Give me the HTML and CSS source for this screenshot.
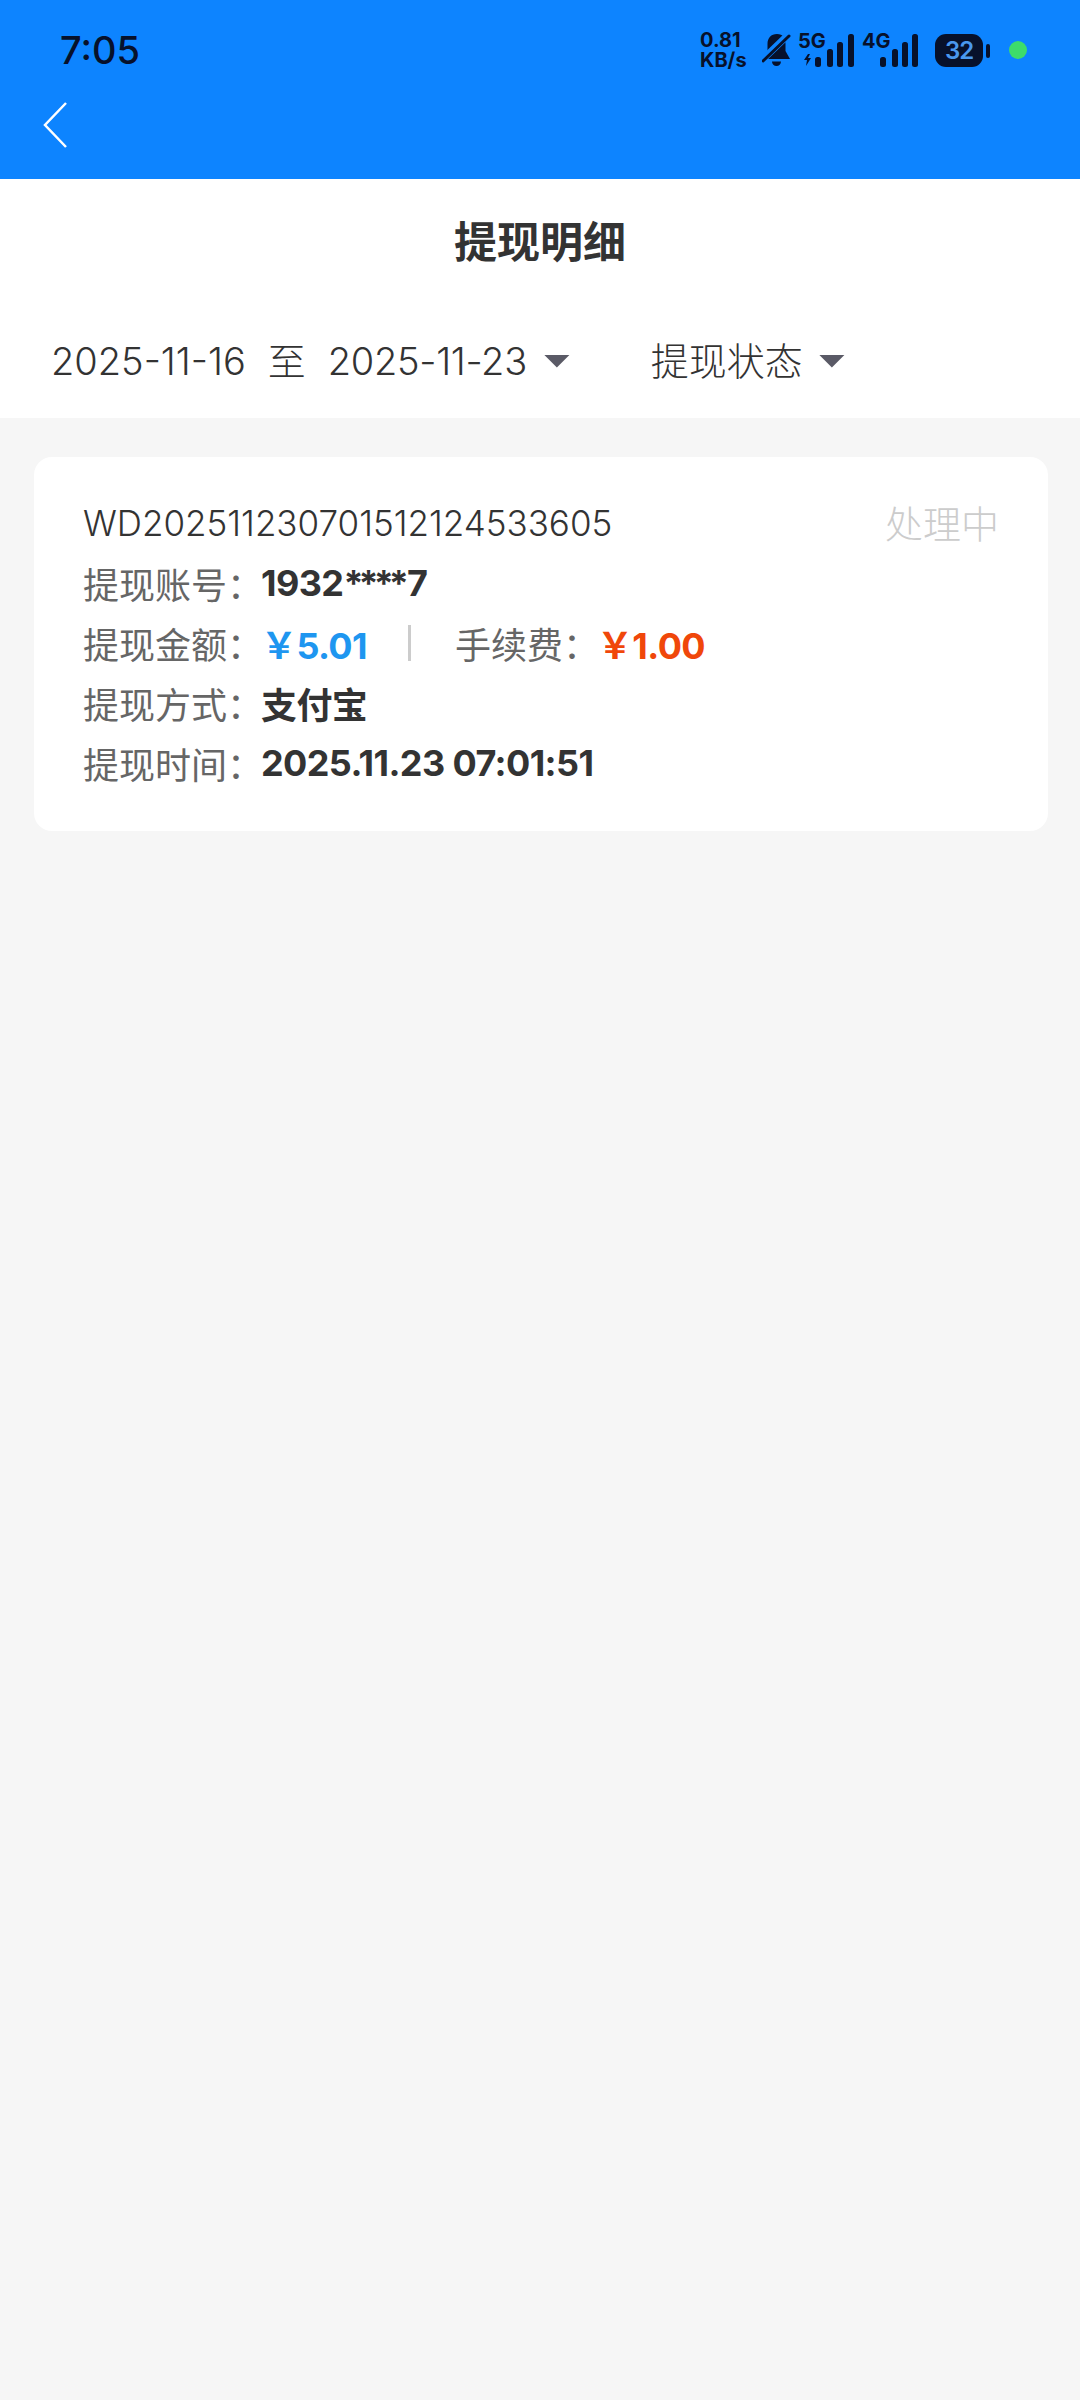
FILE: index.html
```html
<!DOCTYPE html>
<html lang="zh-CN">
<head>
    <meta charset="UTF-8">
    <meta name="viewport" content="width=device-width, initial-scale=1.0">
    <title>提现明细</title>
    <link rel="stylesheet" href="styles.css">
</head>
<body>

    <div class="top">
        <div class="statusbar">
            <span class="clock">7:05</span>
            <div class="status-icons">
                <span class="speed">0.81<br>KB/s</span>
                <svg class="bell" width="29" height="34" viewBox="0 0 29 34">
                    <path d="M15 1c-6 0-9.500 4-9.500 10v7L1 26h27l-4.500-8v-7C23.500 5 21 1 15 1z" fill="#07112b"/>
                    <path d="M10 28.500h9a4.500 4.500 0 0 1-9 0z" fill="#07112b"/>
                    <path d="M-1 28L27 1" stroke="#0d84ff" stroke-width="7"/>
                    <path d="M1 28L27 3" stroke="#07112b" stroke-width="3" stroke-linecap="round"/>
                </svg>
                <div class="signal signal-5g">
                    <span class="net">5G</span>
                    <svg width="51" height="33" viewBox="0 0 51 33">
                        <path d="M5 20l-4 6h3l-1 6 5-8H5l2-4z" fill="#07112b"/>
                        <rect x="12" y="23" width="6" height="10" rx="2.500" fill="#07112b"/>
                        <rect x="24" y="15" width="6" height="18" rx="2.500" fill="#07112b"/>
                        <rect x="34" y="8" width="6" height="25" rx="2.500" fill="#07112b"/>
                        <rect x="45" y="0" width="6" height="33" rx="2.500" fill="#07112b"/>
                    </svg>
                </div>
                <div class="signal signal-4g">
                    <span class="net">4G</span>
                    <svg width="38" height="33" viewBox="0 0 38 33">
                        <rect x="0" y="23" width="6" height="10" rx="2.500" fill="#07112b"/>
                        <rect x="12" y="15" width="6" height="18" rx="2.500" fill="#07112b"/>
                        <rect x="22" y="8" width="6" height="25" rx="2.500" fill="#07112b"/>
                        <rect x="32" y="0" width="6" height="33" rx="2.500" fill="#07112b"/>
                    </svg>
                </div>
                <div class="battery"><span class="battery-level">32</span><i class="battery-nub"></i></div>
                <i class="dot"></i>
            </div>
        </div>
        <div class="navbar">
            <svg width="26" height="48" viewBox="0 0 26 48">
                <path d="M23 2L2 24l21 22" fill="none" stroke="#fff" stroke-width="2.500"/>
            </svg>
        </div>
    </div>

    <div class="head">
        <h1 class="page-title">提现明细</h1>
        <div class="filters">
            <div class="filter-date">
                <span>2025-11-16</span>
                <span>至</span>
                <span class="date-end">2025-11-23</span>
                <i class="caret"></i>
            </div>
            <div class="filter-state">
                <span>提现状态</span>
                <i class="caret"></i>
            </div>
        </div>
    </div>

    <div class="list">
        <div class="card">
            <div class="card-top">
                <span class="order-no">WD202511230701512124533605</span>
                <span class="order-state">处理中</span>
            </div>
            <div class="row">
                <span class="label">提现账号：</span>
                <span class="value">1932<span class="stars">****</span>7</span>
            </div>
            <div class="row">
                <span class="label">提现金额：</span>
                <span class="value money-in">￥5.01</span>
                <i class="split"></i>
                <span class="label label-fee">手续费：</span>
                <span class="value money-fee">￥1.00</span>
            </div>
            <div class="row">
                <span class="label">提现方式：</span>
                <span class="value">支付宝</span>
            </div>
            <div class="row">
                <span class="label">提现时间：</span>
                <span class="value">2025.11.23 07:01:51</span>
            </div>
        </div>
    </div>

</body>
</html>
```

FILE: styles.css
```css
* {
    box-sizing: border-box;
}
body {
    margin: 0;
    min-height: 2400px;
    background-color: #f6f6f6;
    font-family: Inter, "Noto Sans CJK SC", sans-serif;
    color: #333;
}
.top {
    height: 179px;
    background-color: #0d84ff;
}
.statusbar {
    height: 100px;
    padding: 0 53px 0 60px;
    display: flex;
    align-items: center;
    justify-content: space-between;
    color: #07112b;
}
.clock {
    font-size: 38px;
    font-weight: 500;
}
.status-icons {
    display: flex;
    align-items: center;
}
.speed {
    width: 62px;
    font-size: 20px;
    line-height: 20px;
    font-weight: 700;
}
.bell {
    display: block;
}
.signal {
    position: relative;
    height: 33px;
}
.signal svg {
    display: block;
}
.signal-5g {
    margin-left: 12px;
}
.signal-4g {
    margin-left: 26px;
}
.net {
    position: absolute;
    left: -5px;
    top: -4px;
    font-size: 20px;
    line-height: 22px;
    font-weight: 700;
}
.signal-4g .net {
    left: -18px;
}
.battery {
    margin-left: 17px;
    width: 48px;
    height: 33px;
    border-radius: 11px;
    background-color: #07112b;
    position: relative;
    text-align: center;
}
.battery-level {
    color: #4a98ee;
    font-size: 24px;
    line-height: 33px;
    font-weight: 600;
    letter-spacing: -1px;
}
.battery-nub {
    position: absolute;
    right: -7px;
    top: 10px;
    width: 4px;
    height: 14px;
    border-radius: 2px;
    background-color: #07112b;
}
.dot {
    margin-left: 26px;
    width: 18px;
    height: 18px;
    border-radius: 50%;
    background-color: #3ddc6b;
}
.navbar {
    padding: 1px 0 0 43px;
}
.navbar svg {
    display: block;
}
.head {
    height: 239px;
    background-color: #fff;
}
.page-title {
    margin: 0;
    padding-top: 35px;
    text-align: center;
    font-size: 43px;
    line-height: 56px;
    font-weight: 700;
}
.filters {
    margin-top: 65px;
    padding-left: 51px;
    display: flex;
    align-items: center;
    font-size: 38px;
    line-height: 52px;
    font-weight: 300;
}
.filter-date {
    display: flex;
    align-items: center;
    gap: 22px;
}
.date-end {
    letter-spacing: -0.300px;
}
.filter-state {
    margin-left: 81px;
    display: flex;
    align-items: center;
    gap: 16px;
}
.caret {
    width: 26px;
    height: 13px;
    background-color: #5a5a66;
    clip-path: polygon(0 0, 100% 0, 50% 100%);
}
.filter-date .caret {
    margin-left: -5px;
}
.list {
    padding: 39px 32px 0 34px;
}
.card {
    height: 374px;
    padding: 38px 49px 0;
    background-color: #fff;
    border-radius: 18px;
}
.card-top {
    display: flex;
    justify-content: space-between;
    align-items: center;
    height: 56px;
    margin-bottom: 2px;
    font-size: 35px;
    font-weight: 300;
}
.order-state {
    padding-bottom: 4px;
    color: #ccc;
    font-size: 38px;
    font-weight: 300;
}
.row {
    height: 60px;
    display: flex;
    align-items: center;
}
.label {
    width: 178px;
    font-size: 36px;
    font-weight: 400;
    color: #666;
    white-space: nowrap;
}
.label-fee {
    width: 142px;
}
.value {
    font-size: 36px;
    font-weight: 700;
    color: #333;
    letter-spacing: -0.600px;
}
.stars {
    letter-spacing: -5px;
    margin-right: 3px;
}
.money-in {
    color: #1e96f0;
}
.money-fee {
    color: #f0470a;
}
.split {
    width: 3px;
    height: 36px;
    margin: 0 44px 0 41px;
    background-color: #ccc;
}
```
